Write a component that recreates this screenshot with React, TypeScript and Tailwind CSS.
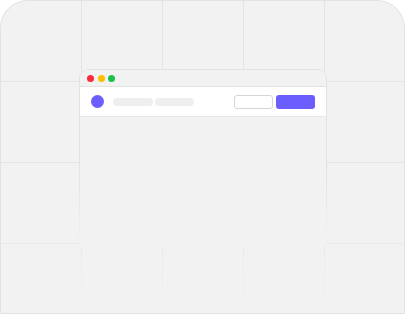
const cells = Array.from({ length: 20 });

export default function App() {
  return (
    <div className="w-[405px] h-[315px] bg-white">
      <div className="relative w-[405px] h-[314px] rounded-t-[28px] border border-[#e2e2e2] bg-[#f2f2f2] overflow-hidden">
        <div className="absolute inset-0 [mask-image:linear-gradient(to_bottom,black_66%,transparent_98%)]">
          <div className="grid grid-cols-[81px_81px_81px_81px_1fr] grid-rows-[81px_81px_81px_1fr] w-full h-full">
            {cells.map((_, i) => (
              <div
                key={i}
                className={
                  (i % 5 === 4 ? "" : "border-r ") +
                  (i >= 15 ? "" : "border-b ") +
                  "border-[#e4e4e4]"
                }
              />
            ))}
          </div>
        </div>

        {/* browser mock: opaque body, frame fades out */}
        <div className="absolute left-[78px] top-[68px] w-[248px] h-[177px] rounded-t-[9px] bg-[#f2f2f2]">
          <div className="h-full flex flex-col rounded-t-[9px] border border-[#e2e2e2] border-b-0 overflow-hidden [mask-image:linear-gradient(to_bottom,black_55%,transparent_100%)]">
            <div className="h-[17px] flex items-center gap-[3.5px] pl-[7px] pt-[1px] border-b border-[#e2e2e2]">
              <span className="w-[7px] h-[7px] rounded-full bg-[#fc2b3b]" />
              <span className="w-[7px] h-[7px] rounded-full bg-[#fdbd00]" />
              <span className="w-[7px] h-[7px] rounded-full bg-[#1ec14b]" />
            </div>
            <div className="h-[30px] flex items-center bg-white border-b border-[#e8e8e8] pl-[11px] pr-[11px]">
              <span className="w-[13px] h-[13px] rounded-full bg-[#6c5efc]" />
              <span className="ml-[9px] w-[40px] h-[8px] rounded-full bg-[#efefef]" />
              <span className="ml-[2px] w-[39px] h-[8px] rounded-full bg-[#efefef]" />
              <div className="ml-auto flex gap-[3px]">
                <span className="w-[39px] h-[14px] rounded-[3px] border border-[#d6d6d6] bg-white" />
                <span className="w-[39px] h-[14px] rounded-[3px] bg-[#6c5efc]" />
              </div>
            </div>
            <div className="flex-1" />
          </div>
        </div>
      </div>
    </div>
  );
}
